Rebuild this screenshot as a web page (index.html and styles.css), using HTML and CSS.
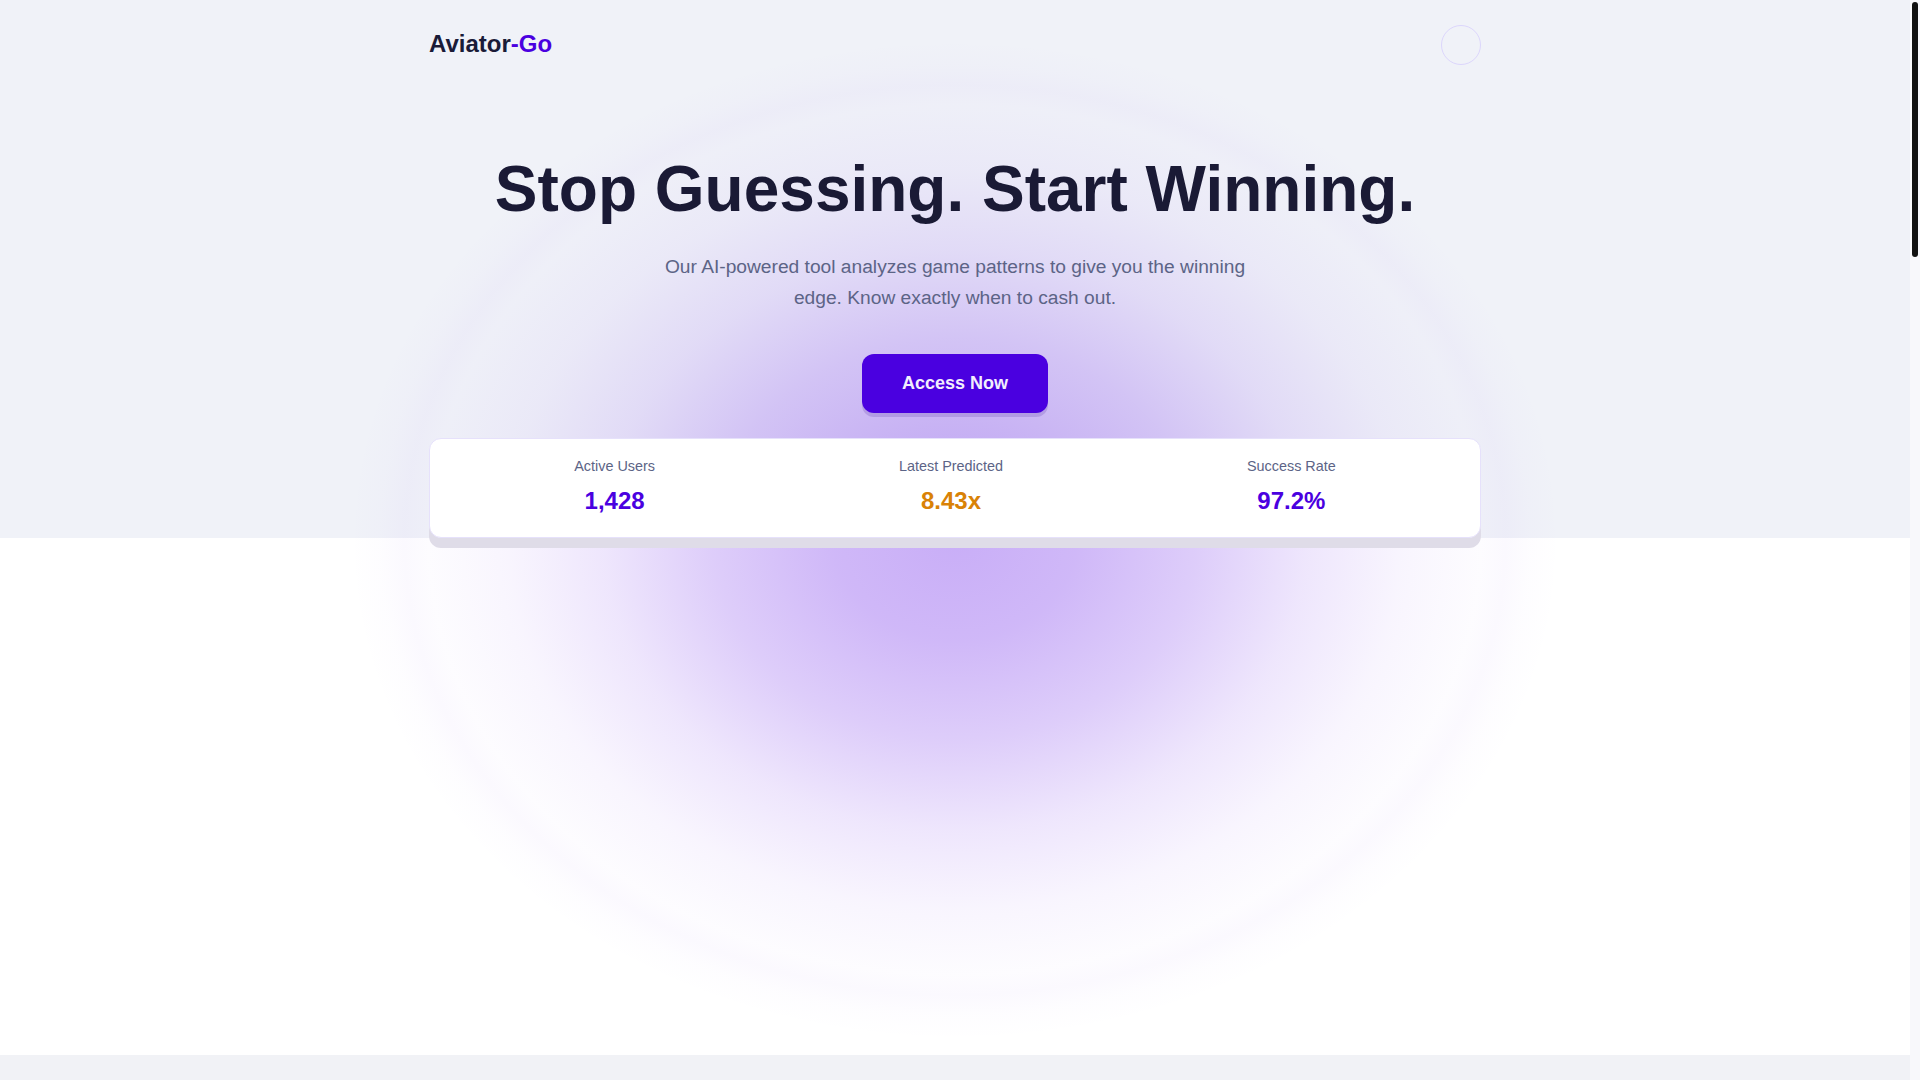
FILE: index.html
```html
<!DOCTYPE html>
<html lang="en">
<head>
<meta charset="utf-8">
<title>Aviator-Go</title>
<link rel="stylesheet" href="styles.css">
</head>
<body>
<div class="page">
  <div class="glow" aria-hidden="true"></div>

  <section class="hero">
    <header class="header container">
      <a class="logo" href="#">Aviator<span class="logo-accent">-Go</span></a>
      <button class="menu-btn" aria-label="Menu"></button>
    </header>

    <div class="hero-body container">
      <h1 class="title">Stop Guessing. Start Winning.</h1>
      <p class="subtitle">Our AI-powered tool analyzes game patterns to give you the winning edge. Know exactly when to cash out.</p>
      <a class="cta" href="#">Access Now</a>

      <div class="stats">
        <div class="stat">
          <div class="stat-label">Active Users</div>
          <div class="stat-value purple">1,428</div>
        </div>
        <div class="stat">
          <div class="stat-label">Latest Predicted</div>
          <div class="stat-value orange">8.43x</div>
        </div>
        <div class="stat">
          <div class="stat-label">Success Rate</div>
          <div class="stat-value purple">97.2%</div>
        </div>
      </div>
    </div>
  </section>

  <section class="game"></section>

  <section class="features"></section>
</div>
<div class="scrollbar" aria-hidden="true"><div class="scrollbar-thumb"></div></div>
</body>
</html>
```

FILE: styles.css
```css
* {
  box-sizing: border-box;
}

body {
  margin: 0;
  background: #ffffff;
  font-family: "Liberation Sans", Arial, Helvetica, sans-serif;
  color: #1a1a35;
}

.page {
  position: relative;
  overflow: hidden;
  margin-right: 10px;
}

.scrollbar {
  position: fixed;
  top: 0;
  right: 0;
  width: 10px;
  height: 100vh;
  background: #f8f8fb;
  z-index: 10;
  padding: 2px;
}

.scrollbar-thumb {
  width: 6px;
  height: 255px;
  border-radius: 3px;
  background: #111111;
}

.glow {
  position: absolute;
  left: 50%;
  top: 40px;
  width: 1210px;
  height: 1000px;
  transform: translateX(-50%);
  z-index: 1;
  pointer-events: none;
  background: radial-gradient(ellipse closest-side at 50% 50%,
    rgba(126, 62, 236, 0.42) 0%,
    rgba(126, 62, 236, 0.37) 20%,
    rgba(126, 62, 236, 0.26) 40%,
    rgba(126, 62, 236, 0.13) 58%,
    rgba(126, 62, 236, 0.05) 74%,
    rgba(126, 62, 236, 0.015) 87%,
    rgba(126, 62, 236, 0.03) 91%,
    rgba(126, 62, 236, 0.012) 95%,
    rgba(126, 62, 236, 0.0) 100%);
}

.container {
  max-width: 1100px;
  margin: 0 auto;
  padding: 0 24px;
  position: relative;
  z-index: 2;
}

.hero {
  background: #f0f2f8;
}

.header {
  height: 88px;
  display: flex;
  align-items: center;
  justify-content: space-between;
}

.logo {
  font-size: 24px;
  font-weight: 700;
  color: #1a1b38;
  text-decoration: none;
}

.logo-accent {
  color: #4a00e0;
}

.menu-btn {
  width: 40px;
  height: 40px;
  border-radius: 50%;
  border: 1.5px solid #dcd6fc;
  background: transparent;
  padding: 0;
  margin-top: 1px;
}

.hero-body {
  display: flex;
  flex-direction: column;
  align-items: center;
  text-align: center;
}

.title {
  margin: 66px 0 28px;
  font-size: 64px;
  line-height: 1.1;
  font-weight: 700;
  color: #1a1a35;
}

.subtitle {
  margin: 0 0 40px;
  max-width: 600px;
  font-size: 19.2px;
  line-height: 1.6;
  color: #5c6486;
}

.cta {
  display: inline-block;
  padding: 18px 40px;
  font-size: 18px;
  line-height: 23px;
  font-weight: 700;
  color: #f2eefd;
  background: #4a00e0;
  border-radius: 12px;
  text-decoration: none;
  box-shadow: 0 4px 0 rgba(90, 60, 170, 0.22);
  margin-bottom: 25px;
}

.stats {
  align-self: stretch;
  display: flex;
  justify-content: center;
  gap: 244px;
  background: #ffffff;
  border: 1px solid #e6e1fb;
  border-radius: 12px;
  padding: 17px 0 22px;
  box-shadow: 0 10px 0 #dfdce8;
}

.stat {
  display: flex;
  flex-direction: column;
  align-items: center;
}

.stat-label {
  font-size: 14.4px;
  line-height: 20px;
  color: #5c6486;
}

.stat-value {
  margin-top: 10px;
  font-size: 24px;
  line-height: 29px;
  font-weight: 700;
}

.purple {
  color: #4a00e0;
}

.orange {
  color: #d98206;
}

.game {
  height: 517px;
  background: #ffffff;
}

.features {
  height: 3516px;
  background: #f1f2f6;
}
```
